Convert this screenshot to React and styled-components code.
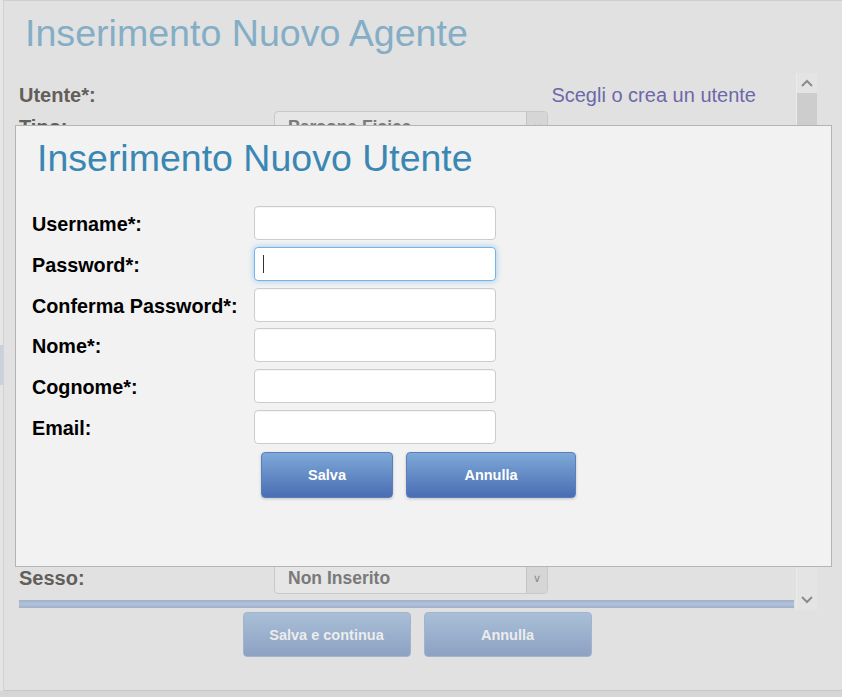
import React from 'react';
import styled, { createGlobalStyle } from 'styled-components';

const GlobalStyle = createGlobalStyle`
  html, body {
    margin: 0;
    padding: 0;
    background: #d6d6d6;
    font-family: "Liberation Sans", Arial, sans-serif;
  }
`;

// righe del form agente coperte dal popup utente
const righeNascoste = 10;

const campiUtente = [
    { label: 'Username*:', type: 'text' },
    { label: 'Password*:', type: 'password', focus: true },
    { label: 'Conferma Password*:', type: 'password' },
    { label: 'Nome*:', type: 'text' },
    { label: 'Cognome*:', type: 'text' },
    { label: 'Email:', type: 'text' },
];

export default function App() {
    return (
        <>
            <GlobalStyle />
            <Page>
                <PageStrip />
                <AgentDialog>
                    <AgentTitle>Inserimento Nuovo Agente</AgentTitle>
                    <ScrollArea>
                        <ScrollContent>
                            <UserRow>
                                <BackLabel>Utente*:</BackLabel>
                                <UserLink>Scegli o crea un utente</UserLink>
                            </UserRow>
                            <FieldList>
                                <BackRow>
                                    <BackLabel>Tipo:</BackLabel>
                                    <BackSelect>
                                        <span>Persona Fisica</span>
                                        <SelectArrow>&#8744;</SelectArrow>
                                    </BackSelect>
                                </BackRow>
                                {Array.from({ length: righeNascoste }).map((_, i) => (
                                    <BackRow key={i}>
                                        <BackLabel />
                                        <BackInput />
                                    </BackRow>
                                ))}
                                <BackRow>
                                    <BackLabel>Sesso:</BackLabel>
                                    <BackSelect>
                                        <span>Non Inserito</span>
                                        <SelectArrow>&#8744;</SelectArrow>
                                    </BackSelect>
                                </BackRow>
                            </FieldList>
                            <BlueBar />
                        </ScrollContent>
                        <ScrollBar>
                            <ScrollButton>
                                <svg width="12" height="8" viewBox="0 0 12 8"><path d="M1 7 L6 2 L11 7" fill="none" stroke="#8c8c8c" strokeWidth="2" /></svg>
                            </ScrollButton>
                            <ScrollThumb />
                            <ScrollTrack />
                            <ScrollButton>
                                <svg width="12" height="8" viewBox="0 0 12 8"><path d="M1 1 L6 6 L11 1" fill="none" stroke="#8c8c8c" strokeWidth="2" /></svg>
                            </ScrollButton>
                        </ScrollBar>
                    </ScrollArea>
                    <BackButtons>
                        <BackButton>Salva e continua</BackButton>
                        <BackButton>Annulla</BackButton>
                    </BackButtons>

                    <UserModal>
                        <ModalTitle>Inserimento Nuovo Utente</ModalTitle>
                        <UserForm>
                            {campiUtente.map((c) => (
                                <React.Fragment key={c.label}>
                                    <FormLabel>{c.label}</FormLabel>
                                    <InputBox>
                                        <TextInput type={c.type} $focused={c.focus} autoFocus={c.focus} />
                                        {c.focus && <Caret />}
                                    </InputBox>
                                </React.Fragment>
                            ))}
                        </UserForm>
                        <ModalButtons>
                            <BlueButton $w={132}>Salva</BlueButton>
                            <BlueButton $w={170}>Annulla</BlueButton>
                        </ModalButtons>
                    </UserModal>
                </AgentDialog>
            </Page>
        </>
    );
}

const Page = styled.div`
    display: flex;
    height: 697px;
    overflow: hidden;
    align-items: flex-start;
`;

const PageStrip = styled.div`
    width: 3px;
    height: 691px;
    background: linear-gradient(#e6e6e6 0 345px, #c9d1dc 345px 385px, #e4e4e4 385px);
`;

const AgentDialog = styled.div`
    position: relative;
    width: 839px;
    height: 691px;
    background: #e1e1e1;
    border-left: 1px solid #d2d2d2;
    border-top: 1px solid #cfcfcf;
    border-bottom: 1px solid #c6c6c6;
    padding-left: 15px;
    box-sizing: border-box;
    display: flex;
    flex-direction: column;
`;

const AgentTitle = styled.h1`
    margin: 14px 0 0 6px;
    font-size: 37.6px;
    line-height: 37px;
    font-weight: normal;
    color: #84aec6;
`;

const ScrollArea = styled.div`
    margin-top: 21px;
    display: flex;
    width: 798px;
    height: 537px;
`;

const ScrollContent = styled.div`
    flex: 1;
    display: flex;
    flex-direction: column;
`;

const UserRow = styled.div`
    display: flex;
    align-items: center;
    justify-content: space-between;
    height: 32px;
    margin-top: 6px;
    padding-right: 38px;
`;

const BackLabel = styled.div`
    width: 255px;
    font-size: 20px;
    font-weight: bold;
    color: #625e5a;
    white-space: nowrap;
`;

const UserLink = styled.a`
    font-size: 20px;
    color: #6d68a8;
`;

const FieldList = styled.div`
    display: flex;
    flex-direction: column;
    gap: 9px;
`;

const BackRow = styled.div`
    display: flex;
    align-items: center;
    height: 32px;
`;

const BackSelect = styled.div`
    width: 274px;
    height: 32px;
    box-sizing: border-box;
    border: 1px solid #c9c9c9;
    border-radius: 4px;
    background: #e6e6e6;
    display: flex;
    align-items: center;
    justify-content: space-between;
    padding-left: 13px;
    font-size: 17.5px;
    font-weight: bold;
    color: #7a7a7a;
    overflow: hidden;
`;

const SelectArrow = styled.span`
    width: 20px;
    height: 100%;
    border-left: 1px solid #c4c4c4;
    background: #d6d6d6;
    display: flex;
    align-items: center;
    justify-content: center;
    font-size: 11px;
    font-weight: normal;
    color: #8a8a8a;
`;

const BackInput = styled.div`
    width: 274px;
    height: 32px;
    box-sizing: border-box;
    border: 1px solid #c9c9c9;
    border-radius: 4px;
    background: #e6e6e6;
`;

const BlueBar = styled.div`
    margin-top: 6px;
    height: 8px;
    background: linear-gradient(#9fb0ca, #b2c2d9 50%, #9fb0ca);
`;

const ScrollBar = styled.div`
    width: 20px;
    margin-left: 2px;
    display: flex;
    flex-direction: column;
    background: #e4e4e4;
    border-left: 1px solid #ebebeb;
`;

const ScrollButton = styled.div`
    height: 20px;
    display: flex;
    align-items: center;
    justify-content: center;
`;

const ScrollThumb = styled.div`
    height: 320px;
    background: #cdcdcd;
`;

const ScrollTrack = styled.div`
    flex: 1;
`;

const BackButtons = styled.div`
    width: 798px;
    display: flex;
    justify-content: center;
    gap: 13px;
    margin-top: 2px;
    padding-right: 2px;
    box-sizing: border-box;
`;

const BackButton = styled.button`
    width: 168px;
    height: 45px;
    border: 1px solid #a3b3cc;
    border-radius: 4px;
    background: linear-gradient(#a9bfd7, #8da1c3);
    color: #ececec;
    font-family: inherit;
    font-size: 14.5px;
    font-weight: bold;
`;

const UserModal = styled.div`
    position: absolute;
    left: 11px;
    top: 124px;
    width: 817px;
    height: 442px;
    box-sizing: border-box;
    background: #f2f2f2;
    border: 1px solid #b4b4b4;
    padding: 14px 0 0 16px;
`;

const ModalTitle = styled.h2`
    margin: 0 0 0 5px;
    font-size: 37.5px;
    line-height: 37px;
    font-weight: normal;
    color: #3a87b3;
`;

const UserForm = styled.div`
    margin-top: 29px;
    display: grid;
    grid-template-columns: 222px 242px;
    grid-auto-rows: 34px;
    row-gap: 6.8px;
    align-items: center;
`;

const FormLabel = styled.label`
    padding-top: 3px;
    font-size: 19.8px;
    font-weight: bold;
    color: #000;
    white-space: nowrap;
`;

const InputBox = styled.div`
    position: relative;
    height: 34px;
`;

const TextInput = styled.input`
    height: 34px;
    width: 242px;
    box-sizing: border-box;
    border: 1px solid ${(p) => (p.$focused ? '#74b4ee' : '#cccccc')};
    border-radius: 4px;
    background: #fff;
    box-shadow: ${(p) => (p.$focused ? '0 0 6px rgba(102, 175, 233, 0.6)' : 'inset 0 1px 1px rgba(0,0,0,0.04)')};
    outline: none;
    padding: 0 8px;
    font-size: 16px;
    caret-color: transparent;
`;

const Caret = styled.span`
    position: absolute;
    left: 9px;
    top: 8px;
    width: 1px;
    height: 18px;
    background: #333;
`;

const ModalButtons = styled.div`
    display: flex;
    gap: 13px;
    margin-top: 8px;
    padding-left: 229px;
`;

const BlueButton = styled.button`
    flex-shrink: 0;
    width: ${(p) => p.$w}px;
    height: 46px;
    border: 1px solid #5a7fbd;
    border-radius: 4px;
    background: linear-gradient(#7ea9d8, #4a6db3);
    box-shadow: 0 1px 3px rgba(0, 0, 0, 0.2);
    color: #fff;
    font-family: inherit;
    font-size: 14.5px;
    font-weight: bold;
`;
